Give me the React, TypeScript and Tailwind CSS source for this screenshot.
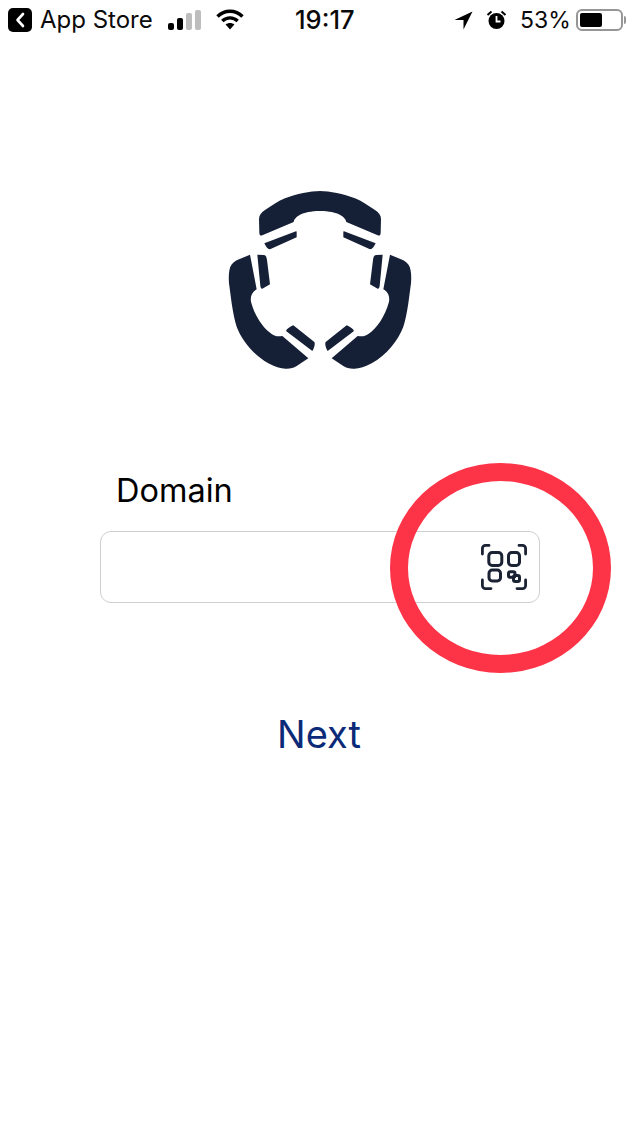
const FONT = "font-['Inter','Liberation_Sans',sans-serif]";

// Left-hand half of the logo; the right half is the same shape mirrored
const HALF =
  "M316 33C285 33 245 42 210 55C190 63 170 77 150 90C138 98 132 106 132 118L133 158C133 165 137 168 142 166L236 126C238 113 258 93 316 93Z " +
  "M148 190L243 154C245 154 245 156 245 158V172L165 208C157 208 152 198 148 190Z " +
  "M105 224L65 241C52 248 45 258 43 272C41 285 41 295 42 310L50 370C54 395 58 420 65 440C80 480 115 525 160 550C180 561 200 567 215 566C228 566 236 564 245 558L280 535L202 468C190 470 180 470 170 462C145 445 120 410 108 365C105 348 112 335 125 328Z " +
  "M127 224L147 225C153 226 155 232 156 240L165 313L142 326C138 327 137 322 136 318Z " +
  "M235 436L298 486C301 490 298 503 292 513L214 454C211 451 224 440 235 436Z";

function Logo() {
  return (
    <svg width="210" height="200" viewBox="0 0 630 600" aria-hidden>
      <path d={HALF} fill="#151f35" />
      <path d={HALF} fill="#151f35" transform="matrix(-1 0 0 1 630 0)" />
    </svg>
  );
}

function ScanIcon() {
  return (
    <svg width="46" height="46" viewBox="0 0 46 46" fill="none" stroke="#1b2233" strokeLinecap="round" strokeLinejoin="round" aria-hidden>
      <g strokeWidth="2.8">
        <path d="M8 1.4H4.5A3.1 3.1 0 0 0 1.4 4.5V10" />
        <path d="M38 1.4H41.5A3.1 3.1 0 0 1 44.6 4.5V10" />
        <path d="M1.4 36V41.5A3.1 3.1 0 0 0 4.5 44.6H10" />
        <path d="M44.6 36V41.5A3.1 3.1 0 0 1 41.5 44.6H36" />
      </g>
      <g strokeWidth="3">
        <rect x="7.8" y="8.5" width="13" height="13" rx="3.4" />
        <rect x="27.5" y="8.5" width="11" height="13" rx="3.2" />
        <rect x="8" y="26" width="11.5" height="11" rx="3.2" />
        <rect x="27.5" y="27.8" width="6.5" height="5.5" rx="1.8" />
        <rect x="32.5" y="31.5" width="6" height="6" rx="1.8" />
      </g>
    </svg>
  );
}

function StatusBar() {
  return (
    <div className="flex h-[40px] items-center pl-2 leading-none text-[#0a0a0a]">
      <div className="flex h-6 w-6 items-center justify-center rounded-[5px] bg-black">
        <svg width="12" height="16" viewBox="0 0 12 16" fill="none" aria-hidden>
          <path d="M9 2L3.5 8L9 14" stroke="white" strokeWidth="2.6" strokeLinecap="round" strokeLinejoin="round" />
        </svg>
      </div>
      <span className="ml-[8px] w-[128px] whitespace-nowrap text-[24px]">App Store</span>
      {/* signal */}
      <div className="mb-[1px] flex h-[20px] items-end gap-[3px]">
        <div className="h-[7px] w-[6px] rounded-[2px] bg-black" />
        <div className="h-[12px] w-[6px] rounded-[2px] bg-black" />
        <div className="h-[17px] w-[6px] rounded-[2px] bg-[#bdbdbd]" />
        <div className="h-[20px] w-[6px] rounded-[2px] bg-[#bdbdbd]" />
      </div>
      <svg className="ml-[15px] mb-[1px]" width="28" height="21" viewBox="0 0 28 21" fill="none" stroke="black" strokeWidth="3.4" aria-hidden>
        <path d="M1.5 7.5C8.5 0.5 19.5 0.5 26.5 7.5" />
        <path d="M6.3 12C10.7 7.8 17.3 7.8 21.7 12" />
        <path d="M14 20.5L9.6 15.6C12.2 13.6 15.8 13.6 18.4 15.6Z" fill="black" stroke="none" />
      </svg>
      <span className="ml-[51px] w-[74px] whitespace-nowrap text-[25.5px] font-medium">19:17</span>
      <svg className="ml-[85px]" width="19" height="19" viewBox="0 0 19 19" aria-hidden>
        <path d="M18.5 0.5L0.5 9H9.5V18.5Z" fill="black" />
      </svg>
      <svg className="ml-[13px]" width="21" height="20" viewBox="0 0 20 20" aria-hidden>
        <circle cx="10" cy="11" r="8" fill="black" />
        <path d="M10 6V11.5H14" fill="none" stroke="white" strokeWidth="1.8" />
        <path d="M1 5L5 1.5M19 5L15 1.5" stroke="black" strokeWidth="2" />
      </svg>
      <span className="ml-[13px] w-[50px] whitespace-nowrap text-[23px]">53%</span>
      {/* battery */}
      <div className="ml-[6px] flex h-[22px] w-[47px] items-center rounded-[6px] border-2 border-[#969696] p-[2px]">
        <div className="h-full w-[22px] rounded-[2px] bg-black" />
      </div>
      <div className="ml-[1px] h-[8px] w-[2px] rounded-r-sm bg-[#969696]" />
    </div>
  );
}

export default function App() {
  return (
    <div className={`${FONT} relative h-[1135px] w-[640px] overflow-hidden bg-white`}>
      <StatusBar />

      <div className="mt-[140px] flex justify-center">
        <Logo />
      </div>

      <div className="mt-[90px] px-[100px]">
        <label className="block pl-[16px] pt-[1px] text-[32.5px] leading-[40px] text-black">Domain</label>
        <div className="mt-[20px] flex h-[72px] items-center justify-end rounded-[11px] border border-[#cfcfcf] pr-[12px]">
          <ScanIcon />
        </div>
      </div>

      <div className="mt-[108px] pr-[2px] text-center text-[38px] leading-[46px] text-[#0b2a78]">Next</div>

      {/* annotation ring drawn over the screenshot */}
      <div className="absolute left-[390px] top-[463px] h-[210px] w-[221px] rounded-[50%] border-[18px] border-[#fd3447]" />
    </div>
  );
}
